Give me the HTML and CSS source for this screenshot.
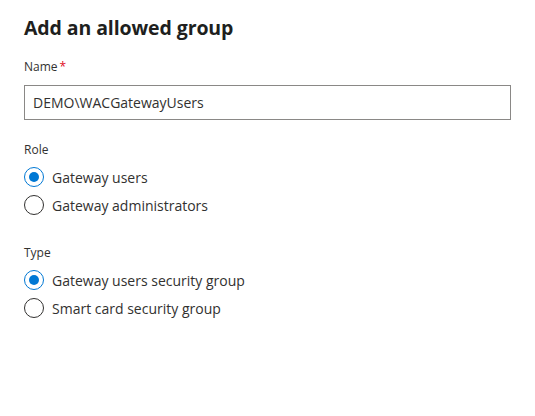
FILE: index.html
```html
<!DOCTYPE html>
<html>
<head>
<meta charset="utf-8">
<link rel="stylesheet" href="styles.css">
</head>
<body>
<div class="panel">
  <h1 class="title">Add an allowed group</h1>
  <div class="field">
    <label class="label">Name<span class="req">*</span></label>
    <div class="input">DEMO\WACGatewayUsers</div>
  </div>
  <div class="group role">
    <div class="label">Role</div>
    <div class="option"><span class="radio checked"></span><span>Gateway users</span></div>
    <div class="option"><span class="radio"></span><span>Gateway administrators</span></div>
  </div>
  <div class="group type">
    <div class="label">Type</div>
    <div class="option"><span class="radio checked"></span><span>Gateway users security group</span></div>
    <div class="option"><span class="radio"></span><span>Smart card security group</span></div>
  </div>
</div>
</body>
</html>
```
FILE: styles.css
```css
html, body {
  margin: 0;
  padding: 0;
  background: #fff;
}
body {
  font-family: "Open Sans", "Noto Sans", sans-serif;
  color: #323130;
}
.panel {
  padding: 14px 24px 0 24px;
  width: 487px;
}
.title {
  margin: 0;
  font-size: 19.5px;
  font-weight: 700;
  line-height: 28px;
  color: #201f1e;
  letter-spacing: -0.1px;
}
.field {
  margin-top: 17px;
}
.label {
  display: block;
  font-size: 12px;
  line-height: 16px;
  color: #323130;
}
.req {
  color: #e00b1c;
  margin-left: 2px;
}
.input {
  margin-top: 10px;
  border: 1px solid #8a8886;
  box-sizing: border-box;
  height: 35px;
  padding: 0 8px;
  font-size: 14px;
  line-height: 33px;
  color: #323130;
}
.group.role {
  margin-top: 22px;
}
.group.type {
  margin-top: 26px;
}
.option {
  display: flex;
  align-items: center;
  gap: 8px;
  height: 28px;
  font-size: 14px;
  color: #323130;
}
.group .label {
  margin-bottom: 5px;
}
.radio {
  width: 20px;
  height: 20px;
  box-sizing: border-box;
  border: 1px solid #323130;
  border-radius: 50%;
  display: flex;
  align-items: center;
  justify-content: center;
  flex: none;
}
.radio.checked {
  border-color: #0078d4;
}
.radio.checked::after {
  content: "";
  width: 10px;
  height: 10px;
  border-radius: 50%;
  background: #0078d4;
}
```
